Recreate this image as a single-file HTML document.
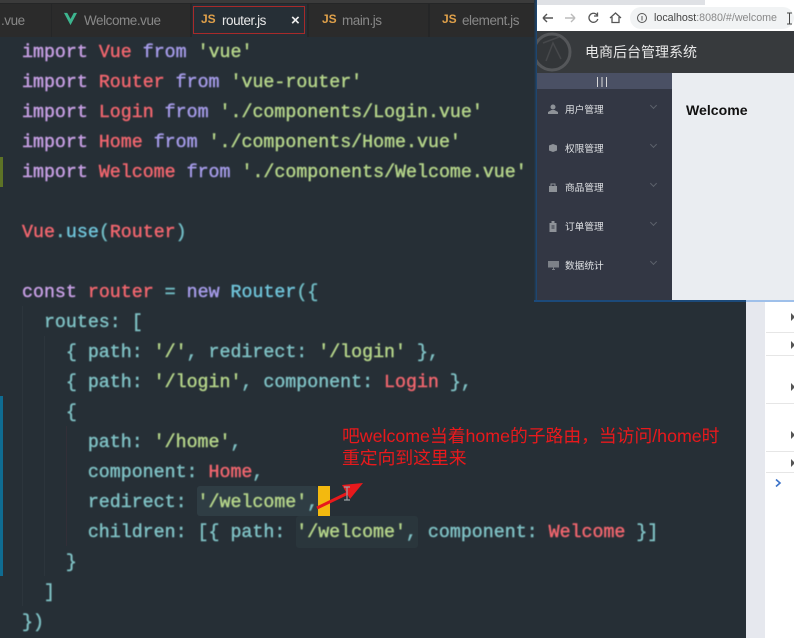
<!DOCTYPE html>
<html><head><meta charset="utf-8"><style>
html,body{margin:0;padding:0}
body{width:794px;height:638px;position:relative;overflow:hidden;background:#262f36;font-family:"Liberation Sans","Noto Sans CJK SC",sans-serif}
.a{position:absolute}
#code{position:absolute;left:0;top:2px;filter:blur(.4px)}
.l{position:absolute;left:22px;font:18.3px/30px "Liberation Mono","DejaVu Sans Mono",monospace;white-space:pre;color:#7fc1c4;-webkit-text-stroke:.45px currentColor}
.k{color:#c79fe4}.f{color:#a59be8}.r{color:#f0666e}.s{color:#b5d58a}.c{color:#71bcc4}.b{color:#6fc3d8}
.tab{position:absolute;top:4px;height:33px;font-size:13.5px;line-height:33px;color:#888;letter-spacing:-.45px;background:#2b2b2b;filter:blur(.3px)}
.js{position:absolute;top:0;font:bold 12px/31px "Liberation Sans",sans-serif;color:#dfa04a;letter-spacing:0}
.m{position:absolute;left:28px;font-size:9.7px;line-height:12px;color:#dfe1e4;font-family:"Noto Sans CJK SC",sans-serif;white-space:nowrap}
.ic{position:absolute;left:11px}
.ch{position:absolute;left:114px;width:4px;height:4px;border-right:1px solid #5d626c;border-bottom:1px solid #5d626c;transform:rotate(45deg)}
.ar{position:absolute;left:791px;width:0;height:0;border-left:4px solid #555;border-top:4px solid transparent;border-bottom:4px solid transparent}
.hr{position:absolute;left:766px;width:28px;height:1px;background:#e6e6e6}
</style></head><body>

<!-- top strip and tabs -->
<div class="a" style="left:0;top:0;width:537px;height:37px;background:#252627"></div>
<div class="a" style="left:0;top:0;width:537px;height:3px;background:#3b3b3b"></div>
<div class="tab" style="left:0;width:50px;padding-left:1px">.vue</div>
<div class="tab" style="left:52px;width:138px"><svg class="a" style="left:11px;top:8px" width="15" height="14" viewBox="0 0 16 15"><path d="M1 1 L8 14 L15 1 L11.5 1 L8 7.5 L4.5 1Z" fill="#3db58f"/></svg><span class="a" style="left:32px;top:0">Welcome.vue</span></div>
<div class="tab" style="left:192px;width:115px;background:#262f36"></div>
<div class="a" style="left:193px;top:6px;width:110px;height:26px;border:1.5px solid #a82a2a"></div>
<div class="tab" style="left:193px;top:4px;width:112px;background:none;color:#e8e8e8"><span class="js" style="left:8px;top:0">JS</span><span class="a" style="left:29px;top:0">router.js</span><span class="a" style="left:98px;top:0;font-weight:bold;font-size:15px;color:#eee">×</span></div>
<div class="tab" style="left:309px;width:119px"><span class="js" style="left:13px">JS</span><span class="a" style="left:33px;top:0">main.js</span></div>
<div class="tab" style="left:430px;width:106px"><span class="js" style="left:12px">JS</span><span class="a" style="left:32px;top:0">element.js</span></div>

<!-- gutter marks -->
<div class="a" style="left:0;top:157px;width:3px;height:30px;background:#5d7326"></div>
<div class="a" style="left:0;top:396px;width:3px;height:180px;background:#0f6c92"></div>
<div class="a" style="left:22px;top:306px;width:1px;height:300px;background:#2c353c"></div>
<div class="a" style="left:44px;top:336px;width:1px;height:240px;background:#2c353c"></div>
<div class="a" style="left:66px;top:426px;width:1px;height:120px;background:#322f38"></div>

<!-- selection highlights -->
<div class="a" style="left:197px;top:486px;width:121px;height:30px;background:#2f3d44;border-radius:3px"></div>
<div class="a" style="left:296px;top:516px;width:122px;height:32px;background:#2a363c;border-radius:3px"></div>
<div class="a" style="left:318px;top:486px;width:12px;height:30px;background:#f3b90f"></div>

<div id="code">
<div class="l" style="top:36px"><span class="k">import</span> <span class="r">Vue</span> <span class="f">from</span> <span class="s">'vue'</span></div>
<div class="l" style="top:66px"><span class="k">import</span> <span class="r">Router</span> <span class="f">from</span> <span class="s">'vue-router'</span></div>
<div class="l" style="top:96px"><span class="k">import</span> <span class="r">Login</span> <span class="f">from</span> <span class="s">'./components/Login.vue'</span></div>
<div class="l" style="top:126px"><span class="k">import</span> <span class="r">Home</span> <span class="f">from</span> <span class="s">'./components/Home.vue'</span></div>
<div class="l" style="top:156px"><span class="k">import</span> <span class="r">Welcome</span> <span class="f">from</span> <span class="s">'./components/Welcome.vue'</span></div>
<div class="l" style="top:216px"><span class="r">Vue</span><span class="c">.</span><span class="b">use</span><span class="c">(</span><span class="r">Router</span><span class="c">)</span></div>
<div class="l" style="top:276px"><span class="k">const</span> <span class="r">router</span> <span class="c">=</span> <span class="f">new</span> <span class="b">Router</span><span class="c">({</span></div>
<div class="l" style="top:306px">  routes: [</div>
<div class="l" style="top:336px">    { path: <span class="s">'/'</span>, redirect: <span class="s">'/login'</span> },</div>
<div class="l" style="top:366px">    { path: <span class="s">'/login'</span>, component: <span class="r">Login</span> },</div>
<div class="l" style="top:396px">    {</div>
<div class="l" style="top:426px">      path: <span class="s">'/home'</span>,</div>
<div class="l" style="top:456px">      component: <span class="r">Home</span>,</div>
<div class="l" style="top:486px">      redirect: <span class="s">'/welcome'</span>,</div>
<div class="l" style="top:516px">      children: [{ path: <span class="s">'/welcome'</span>, component: <span class="r">Welcome</span> }]</div>
<div class="l" style="top:546px">    }</div>
<div class="l" style="top:576px">  ]</div>
<div class="l" style="top:606px">})</div>
</div>

<!-- annotation -->
<div class="a" style="left:342px;top:425px;font-size:17.8px;line-height:22px;color:#e8191c;white-space:nowrap;font-family:'Liberation Sans','Noto Sans CJK SC',sans-serif">吧welcome当着home的子路由，当访问/home时<br>重定向到这里来</div>
<svg class="a" style="left:310px;top:475px" width="60" height="40" viewBox="0 0 60 40"><path d="M7 33 L38 18" stroke="#e8191c" stroke-width="3"/><path d="M53 8 L32 10 L40 24Z" fill="#e8191c"/><path d="M34 12h6M37 12v13M34 25h6" stroke="#9aa0a4" stroke-width="1.2" fill="none"/></svg>

<!-- right devtools -->
<div class="a" style="left:746px;top:300px;width:20px;height:338px;background:#e6e8ee"></div>
<div class="a" style="left:765px;top:300px;width:29px;height:338px;background:#fff"></div>
<div class="a" style="left:746px;top:300px;width:48px;height:2px;background:#9fc0ea"></div>
<div class="hr" style="top:332px"></div><div class="hr" style="top:355px"></div><div class="hr" style="top:403px"></div><div class="hr" style="top:451px"></div><div class="hr" style="top:472px"></div>
<div class="ar" style="top:313px"></div><div class="ar" style="top:341px"></div><div class="ar" style="top:383px"></div><div class="ar" style="top:431px"></div><div class="ar" style="top:459px"></div>
<svg class="a" style="left:774px;top:478px" width="8" height="10" viewBox="0 0 8 10"><path d="M2 1.5 L6 5 L2 8.5" stroke="#3b72c8" stroke-width="1.6" fill="none"/></svg>

<!-- browser window -->
<div class="a" style="left:534px;top:0;width:3px;height:302px;background:linear-gradient(90deg,#262f36,#1c4a7a)"></div>
<div class="a" style="left:537px;top:0;width:257px;height:31px;background:#fff"></div>
<div class="a" style="left:537px;top:0;width:168px;height:5px;background:#dfe1e5"></div>
<svg class="a" style="left:537px;top:5px" width="257" height="26" viewBox="0 0 257 26">
<rect x="93" y="2" width="164" height="22" rx="11" fill="#f1f3f4"/>
<path d="M6 13h10M6 13l4-4M6 13l4 4" stroke="#555" stroke-width="1.4" fill="none"/>
<path d="M28 13h10M38 13l-4-4M38 13l-4 4" stroke="#bbb" stroke-width="1.4" fill="none"/>
<path d="M60 10a4.500 4.500 0 1 0 .8 4M60.500 7.500v3.500h-3.500" stroke="#555" stroke-width="1.3" fill="none"/>
<path d="M73 13l5.500-5 5.500 5M75 12v5.500h7V12" stroke="#555" stroke-width="1.3" fill="none"/>
<circle cx="105" cy="13" r="4.500" stroke="#555" stroke-width="1" fill="none"/><path d="M105 11v4.500" stroke="#555"/>
<path d="M250 8h5M252.500 8v11M250 19h5" stroke="#444" stroke-width="1" fill="none"/>
</svg>
<div class="a" style="left:654px;top:10px;font-size:10.7px;line-height:16px;color:#888;white-space:nowrap"><span style="color:#444">localhost</span>:8080/#/welcome</div>

<div class="a" style="left:537px;top:31px;width:257px;height:42px;background:#373a3d"></div>
<svg class="a" style="left:537px;top:31px" width="44" height="42" viewBox="0 0 44 42"><circle cx="15" cy="21" r="18" stroke="#55575a" stroke-width="3" fill="#333639"/><path d="M9 30 L16 12 L24 28 M6 12 L22 6" stroke="#46484b" stroke-width="1.500" fill="none"/></svg>
<div class="a" style="left:585px;top:42px;font-size:14px;line-height:20px;color:#e8e8e8;white-space:nowrap;font-family:'Noto Sans CJK SC',sans-serif">电商后台管理系统</div>

<div class="a" style="left:537px;top:73px;width:135px;height:227px;background:#333744"></div>
<div class="a" style="left:537px;top:73px;width:135px;height:16px;background:#4a5064"></div>
<svg class="a" style="left:596px;top:77px" width="12" height="10"><path d="M1.500 0v10M6 0v10M10.500 0v10" stroke="#d8d8d8" stroke-width="1"/></svg>
<div class="a" style="left:672px;top:73px;width:122px;height:227px;background:#eaedf1"></div>
<div class="a" style="left:686px;top:101px;font-size:14.1px;font-weight:bold;line-height:18px;color:#111">Welcome</div>
<div class="a" style="left:534px;top:300px;width:212px;height:2px;background:#1c4a7a"></div>

<div class="a" style="left:537px;top:73px;width:135px;height:227px">
<svg class="ic" style="top:31px" width="10" height="10" viewBox="0 0 10 10"><circle cx="5" cy="3" r="2.500" fill="#8e9298"/><path d="M0 10V8l3.500-2h3L10 8v2Z" fill="#8e9298"/></svg><div class="m" style="top:30px">用户管理</div><div class="ch" style="top:30px"></div>
<svg class="ic" style="top:70px" width="10" height="10" viewBox="0 0 10 10"><path d="M1 2.500L5 1l4 1.500v5L5 9 1 7.500Z" fill="#8e9298"/></svg><div class="m" style="top:69px">权限管理</div><div class="ch" style="top:69px"></div>
<svg class="ic" style="top:109px" width="10" height="10" viewBox="0 0 10 10"><path d="M1 4h8v6H1Z" fill="#8e9298"/><path d="M3 4V2h4v2" stroke="#8e9298" fill="none"/></svg><div class="m" style="top:108px">商品管理</div><div class="ch" style="top:108px"></div>
<svg class="ic" style="top:148px" width="10" height="11" viewBox="0 0 10 11"><path d="M1.500 2h7v9h-7Z" fill="#8e9298"/><path d="M3.500 0h3v2h-3Z" fill="#8e9298"/><path d="M3.500 5h3M3.500 7h3" stroke="#333744"/></svg><div class="m" style="top:147px">订单管理</div><div class="ch" style="top:147px"></div>
<svg class="ic" style="top:187px" width="11" height="10" viewBox="0 0 11 10"><path d="M0 1h11v6.500H0Z" fill="#7d8188"/><path d="M4 9.500h3M5.500 7.500v2" stroke="#7d8188"/></svg><div class="m" style="top:186px">数据统计</div><div class="ch" style="top:186px"></div>
</div>

</body></html>
